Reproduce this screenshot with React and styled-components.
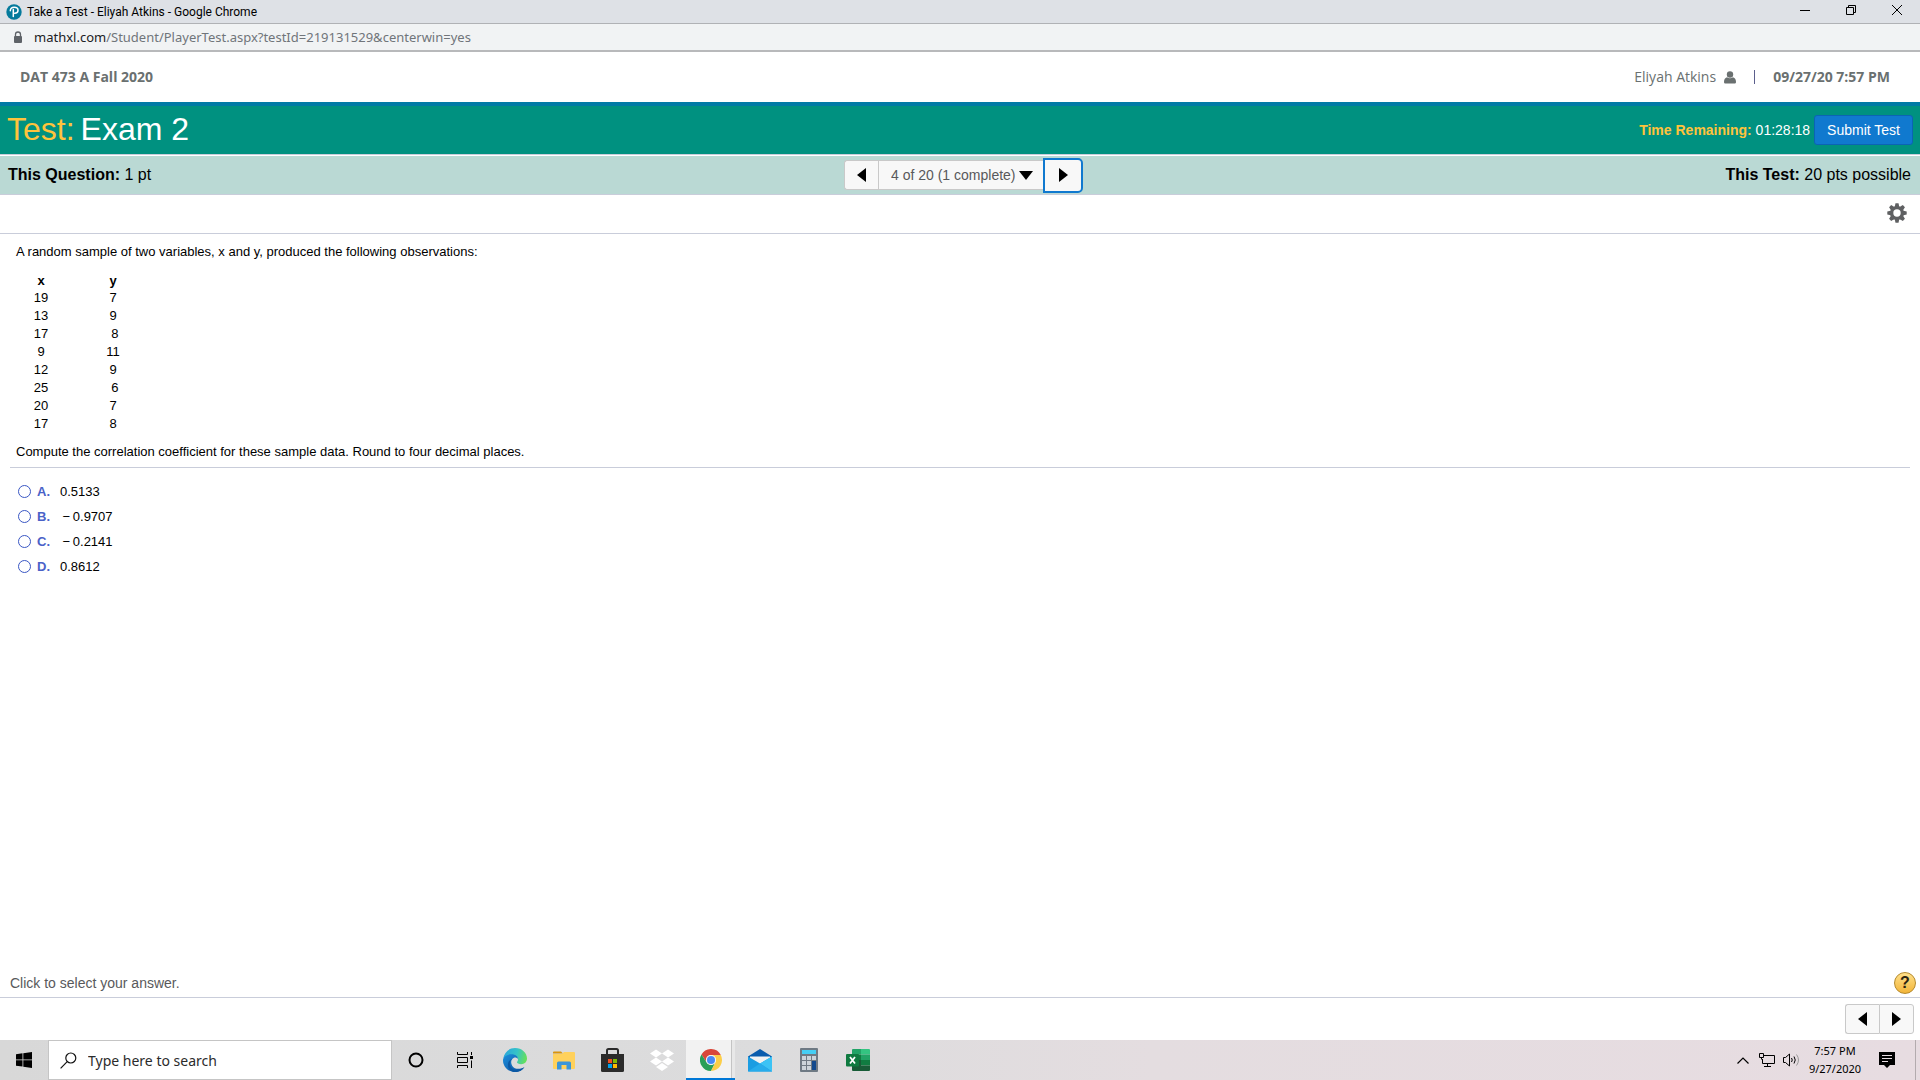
import React, { useState } from "react";
import styled, { createGlobalStyle } from "styled-components";

const GlobalStyle = createGlobalStyle`
  *, *::before, *::after { box-sizing: border-box; }
  html, body { margin: 0; padding: 0; }
  body { background: #fff; color: #000; font-family: "Liberation Sans", Arial, sans-serif; }
  button, input, select { font: inherit; color: inherit; margin: 0; }
  svg { display: block; flex: none; }
`;

const uiFont = `"Open Sans", "Segoe UI", sans-serif`;

const Screen = styled.div`
  min-height: 100vh;
  display: flex;
  flex-direction: column;
`;

const TitleBar = styled.div`
  display: flex;
  align-items: center;
  height: 24px;
  padding-left: 6px;
  background: #dee1e6;
  border-bottom: 1px solid #b0b2b5;
  font: 12px/22px Roboto, "Segoe UI", sans-serif;
`;

const WindowTitle = styled.span`
  flex: 1;
  padding-left: 5px;
`;

const WindowButton = styled.button`
  display: grid;
  place-items: center;
  align-self: flex-start;
  width: 46px;
  height: 20px;
  padding: 0;
  border: 0;
  background: none;
`;

const AddressBar = styled.div`
  display: flex;
  align-items: center;
  gap: 11px;
  height: 28px;
  padding-left: 13px;
  background: #f1f3f4;
  border-bottom: 2px solid #b8b9bb;
  font: 13px/26px "Noto Sans", sans-serif;
  color: #70757a;
`;

const Host = styled.span`
  color: #202124;
`;

const CourseBar = styled.header`
  display: flex;
  align-items: center;
  justify-content: space-between;
  height: 54px;
  padding: 0 30px 0 20px;
  border-bottom: 4px solid #007aa5;
  font: 14px/20px ${uiFont};
  color: #6a7070;
`;

const UserInfo = styled.div`
  display: flex;
  align-items: center;
`;

const UserLink = styled.a`
  display: flex;
  align-items: center;
  gap: 8px;
  color: inherit;
  text-decoration: none;
`;

const Divider = styled.span`
  width: 1px;
  height: 14px;
  margin: 0 18px;
  background: #5b5f8c;
`;

const TestBar = styled.div`
  display: flex;
  align-items: center;
  justify-content: space-between;
  height: 49px;
  padding: 0 7px;
  background: #009180;
  border-bottom: 1px solid #c9cdda;
  color: #fff;
`;

const TestTitle = styled.h1`
  display: flex;
  gap: 6px;
  margin: 0;
  padding-bottom: 2px;
  font-size: 32px;
  line-height: 40px;
  font-weight: 400;
`;

const Gold = styled.span`
  color: #ffc33c;
`;

const TimeBox = styled.div`
  display: flex;
  align-items: center;
  gap: 4px;
  font-size: 14px;
`;

const SubmitButton = styled.button`
  height: 30px;
  padding: 0 12px;
  border: 1px solid #0b64b4;
  border-radius: 3px;
  background: #1079cf;
  color: #fff;
`;

const QuestionBar = styled.div`
  display: grid;
  grid-template-columns: 1fr auto 1fr;
  align-items: center;
  height: 40px;
  padding: 0 9px 0 8px;
  background: #bad9d4;
  border-top: 1px solid #fff;
  border-bottom: 1px solid #c9cdda;
  font-size: 16px;
`;

const Points = styled.div`
  text-align: ${(p) => p.$align || "left"};
`;

const Pager = styled.nav`
  display: flex;
  align-items: center;
  margin-left: 8px;
`;

const PagerButton = styled.button`
  display: grid;
  place-items: center;
  width: ${(p) => (p.$side === "left" ? "34px" : "35px")};
  height: 30px;
  padding: 0;
  border: 1px solid #c9c9c9;
  border-radius: ${(p) => (p.$side === "left" ? "3px 0 0 3px" : "0 3px 3px 0")};
  border-right-width: ${(p) => (p.$side === "left" ? "0" : "1px")};
  background: #f8f8f8;
`;

const FocusedPagerButton = styled(PagerButton)`
  width: 40px;
  height: 35px;
  border: 2px solid #1079cf;
  border-radius: 0 5px 5px 0;
`;

const QuestionPicker = styled.label`
  display: flex;
  align-items: center;
  gap: 3px;
  height: 30px;
  padding: 0 10px 0 12px;
  border: 1px solid #c9c9c9;
  border-right: 0;
  background: #f8f8f8;
  font-size: 14px;
  color: #58595b;
`;

const PickerSelect = styled.select`
  appearance: none;
  padding: 0;
  border: 0;
  background: none;
  outline: 0;
`;

const Toolbar = styled.div`
  display: flex;
  align-items: center;
  justify-content: flex-end;
  height: 39px;
  padding: 0 13px 2px 0;
  border-bottom: 1px solid #c9cdda;
`;

const IconButton = styled.button`
  display: grid;
  place-items: center;
  padding: 0;
  border: 0;
  background: none;
`;

const Question = styled.main`
  flex: 1;
  padding: 8px 10px 0;
  font-size: 13px;
  line-height: 20px;
`;

const Prompt = styled.p`
  margin: 0;
  padding-left: 6px;
`;

const DataTable = styled.table`
  margin: 10px 0 9px;
  border-collapse: collapse;
  line-height: 18px;
  text-align: center;

  th, td { padding: 0; }
  th { line-height: 17px; }
  th:first-child { width: 62px; }
  th:last-child { width: 82px; }
`;

const Rule = styled.hr`
  height: 1px;
  margin: 5px 0 11px;
  border: 0;
  background: #c9cdda;
`;

const Choices = styled.fieldset`
  min-width: 0;
  margin: 0;
  padding: 0 0 0 8px;
  border: 0;
`;

const Choice = styled.label`
  display: flex;
  align-items: center;
  height: 25px;
`;

const Radio = styled.input`
  appearance: none;
  width: 13px;
  height: 13px;
  border: 1px solid #3a57c4;
  border-radius: 50%;
  background: #fff;

  &:checked { background: radial-gradient(#3a57c4 45%, #fff 50%); }
`;

const Letter = styled.b`
  width: 23px;
  margin-left: 6px;
  color: #4a62c8;
`;

const HintBar = styled.div`
  display: flex;
  align-items: center;
  justify-content: space-between;
  height: 30px;
  padding: 0 4px 0 10px;
  border-bottom: 1px solid #c9cdda;
  font-size: 14px;
  color: #58595b;
`;

const HelpButton = styled.button`
  width: 22px;
  height: 22px;
  padding: 0;
  border: 1px solid #b5892c;
  border-radius: 50%;
  background: linear-gradient(#ffe08a, #f2b53a);
  font: bold 16px/20px "Liberation Sans", Arial, sans-serif;
  color: #2c2410;
`;

const FooterNav = styled.nav`
  display: flex;
  align-items: center;
  justify-content: flex-end;
  height: 42px;
  padding-right: 6px;
`;

const TaskBar = styled.footer`
  display: flex;
  align-items: stretch;
  height: 40px;
  background: linear-gradient(90deg, #d8d8d8, #dcdcdd 40%, #e4dde0 60%, #e7dce1);
  font-family: ${uiFont};
`;

const StartButton = styled(IconButton)`
  width: 48px;
`;

const SearchBox = styled.label`
  display: flex;
  align-items: center;
  gap: 11px;
  width: 344px;
  padding-left: 11px;
  border: 1px solid #c5c5c5;
  background: #fff;
`;

const SearchInput = styled.input`
  flex: 1;
  min-width: 0;
  padding: 1px 0 0;
  border: 0;
  outline: 0;
  background: none;
  font: 14px/20px "Noto Sans", sans-serif;

  &::placeholder { color: #2b2b2b; opacity: 1; }
`;

const AppButton = styled(IconButton)`
  width: 49px;
  border-bottom: 2px solid ${(p) => (p.$active ? "#0078d7" : "transparent")};
  border-top: 2px solid transparent;
  background: ${(p) => (p.$active ? "linear-gradient(90deg, #f2f2f2 45px, #c4c4c4 45px 46px, #e8e8e8 46px) border-box" : "none")};
`;

const Tray = styled.div`
  display: flex;
  align-items: center;
  gap: 8px;
  margin-left: auto;
`;

const Clock = styled.time`
  width: 54px;
  font: 11px/18px "Noto Sans", sans-serif;
  text-align: center;
`;

const Notifications = styled(IconButton)`
  margin: 0 12px 0 9px;
`;

const ShowDesktop = styled(IconButton)`
  width: 5px;
  height: 40px;
  border-left: 1px solid #b3abae;
`;

const Triangle = ({ dir }) => (
  <svg width={dir === "down" ? 14 : 9} height={dir === "down" ? 9 : 14} aria-hidden="true">
    <path d={{ left: "M9 0V14L0 7Z", right: "M0 0V14L9 7Z", down: "M0 0H14L7 9Z" }[dir]} fill="#000" />
  </svg>
);

const PearsonIcon = () => (
  <svg width="16" height="16" viewBox="0 0 16 16">
    <circle cx="8" cy="8" r="7.7" fill="#047a9c" />
    <path d="M7.300 12.500V5.500M4.300 6.800C4.300 4.400 6 3.300 8.200 3.300c2.400 0 3.800 1.200 3.800 3 0 1.900-1.500 3-3.300 3" fill="none" stroke="#fff" strokeWidth="1.500" strokeLinecap="round" />
  </svg>
);

const LockIcon = () => (
  <svg width="10" height="13" viewBox="0 0 10 13">
    <path d="M2.500 6V3.500a2.500 2.500 0 0 1 5 0V6" fill="none" stroke="#5f6368" strokeWidth="1.300" />
    <rect x="1" y="5" width="8" height="7" rx="1" fill="#5f6368" />
  </svg>
);

const UserIcon = () => (
  <svg width="12" height="13" viewBox="0 0 12 13">
    <circle cx="6" cy="3.500" r="3.200" fill="#6a7070" />
    <path d="M3 6.200c1.800 1.500 4.200 1.500 6 0 2.200.500 3 2.500 3 4.800 0 1-.7 1.600-1.600 1.600H1.600C.7 12.600 0 12 0 11c0-2.300.8-4.300 3-4.800z" fill="#6a7070" />
  </svg>
);

const GearIcon = () => (
  <svg width="20" height="20" viewBox="-10 -10 20 20">
    <g fill="#5f6062">
      {[0, 45, 90, 135].map((a) => (
        <path key={a} transform={`rotate(${a})`} d="M-2.200-6.500-1.500-9.700h3l.7 3.200v13l-.7 3.200h-3l-.7-3.200z" />
      ))}
      <circle r="7" />
    </g>
    <circle r="3.700" fill="#fff" />
  </svg>
);

const WindowsIcon = () => (
  <svg width="16" height="16" viewBox="0 0 16 16">
    <path d="M0 2.200 6.500 1.300V7.500H0zM7.300 1.200 16 0V7.500H7.300zM0 8.300H6.500V14.600L0 13.700zM7.300 8.300H16V16L7.300 14.800z" />
  </svg>
);

const SearchIcon = () => (
  <svg width="17" height="17" viewBox="0 0 17 17" fill="none" stroke="#111" strokeWidth="1.200">
    <circle cx="10.800" cy="6" r="5" />
    <path d="M7.200 9.700.600 16.300" />
  </svg>
);

const CortanaIcon = () => (
  <svg width="18" height="16">
    <circle cx="8" cy="8" r="6.500" fill="none" stroke="#000" strokeWidth="2" />
  </svg>
);

const TaskViewIcon = () => (
  <svg width="18" height="16" viewBox="0 0 18 16" fill="none" stroke="#000">
    <path d="M.5 0V2.500H10.500V0M.5 16V13.500H10.500V16M.5 5.500H10.500V10.500H.5zM14.500 0V3M14.500 8.500V16" />
    <path d="M13 4h3v3h-3z" fill="#000" stroke="none" />
  </svg>
);

const EdgeIcon = () => (
  <svg width="24" height="24" viewBox="0 0 24 24">
    <defs>
      <linearGradient id="edgeTop" x1="0" x2="1" y1=".3" y2=".5">
        <stop offset="0" stopColor="#2aa5dc" />
        <stop offset=".55" stopColor="#35c3c8" />
        <stop offset="1" stopColor="#66e05a" />
      </linearGradient>
      <linearGradient id="edgeLow" x1="0" x2="1" y1="0" y2="1">
        <stop offset="0" stopColor="#1b8fdc" />
        <stop offset="1" stopColor="#0f4f9e" />
      </linearGradient>
    </defs>
    <path d="M.3 10.500C1.200 4.500 6 0 12 0c7 0 12 5 12 10.500 0 3.500-2.600 5.700-5.800 5.700-2.600 0-4.200-.900-4.200-1.900 0-.8 1-1.200 1-2.900C15 9 12.500 7.300 9 7.300 4.500 7.300 1.500 9.500.3 10.500z" fill="url(#edgeTop)" />
    <path d="M0 12.500C0 8.500 4 6.300 8.500 6.300c4 0 6.500 2.200 6.500 4.700-1-1.300-2.600-1.800-4-1.300-3 1.200-3.700 5-1.700 8.200 2 3 6.500 4 11.700 1.600C19 22.500 16 24 12.300 24 5.500 24 0 19 0 12.500z" fill="url(#edgeLow)" />
    <path d="M9.500 10.700c-3 2-3.500 5.800-1 9 2.500 3 8.500 3.200 13-.7-1.500 2.500-5 5-9.500 5-5 0-7.500-4-7-8 .3-2.600 2-4.500 4.500-5.300z" fill="#0c59a4" />
  </svg>
);

const FolderIcon = () => (
  <svg width="22" height="19" viewBox="0 0 22 19">
    <path d="M0 1.500Q0 .5 1 .5H8L10 2.500H0z" fill="#d9940c" />
    <path d="M0 3H9L11 1H21Q22 1 22 2V17Q22 18 21 18H1Q0 18 0 17z" fill="#ffd15c" />
    <path d="M4 18.500V12Q4 10.500 5.500 10.500h11Q18 10.500 18 12v6.500h-4.500V14h-5v4.500z" fill="#3b96d9" />
  </svg>
);

const StoreIcon = () => (
  <svg width="24" height="24" viewBox="0 0 24 24">
    <path d="M6 7V2.500Q6 1 7.500 1h8Q17 1 17 2.500V7" fill="none" stroke="#2b2b2b" strokeWidth="2" />
    <path d="M0 6H23V22.500Q23 24 21.500 24h-20Q0 24 0 22.500z" fill="#2b2b2b" />
    <path d="M7 11h4v4H7z" fill="#f25022" />
    <path d="M12 11h4v4h-4z" fill="#7fba00" />
    <path d="M7 16h4v4H7z" fill="#00a4ef" />
    <path d="M12 16h4v4h-4z" fill="#ffb900" />
  </svg>
);

const DropboxIcon = () => (
  <svg width="24" height="23" viewBox="0 0 24 23" fill="#fff">
    <path d="M6 .5 12 4.500 6 8.500 0 4.500zM18 .5 24 4.500 18 8.500 12 4.500zM6 8.500 12 12.500 6 16.500 0 12.500zM18 8.500 24 12.500 18 16.500 12 12.500zM12 14 18 18 12 22 6 18z" />
  </svg>
);

const ChromeIcon = () => (
  <svg width="22" height="22" viewBox="-11 -11 22 22">
    <path d="M0-5H9.800A11 11 0 0 0-9.530-5.500L-4.330 2.500A5 5 0 0 1 0-5z" fill="#d9473a" />
    <path d="M-9.530-5.500A11 11 0 0 0 0 11L4.330 2.500A5 5 0 0 1-4.330 2.500z" fill="#2a9f58" />
    <path d="M0 11A11 11 0 0 0 9.800-5H0A5 5 0 0 1 4.330 2.500z" fill="#fcce48" />
    <circle r="5" fill="#f4f4f4" />
    <circle r="4" fill="#4a8af4" />
  </svg>
);

const MailIcon = () => (
  <svg width="24" height="23" viewBox="0 0 24 23">
    <path d="M0 7.500 12 0 24 7.500V9H0z" fill="#0a5cad" />
    <path d="M2 7.500H22V14L12 18 2 14z" fill="#f2f2f2" />
    <path d="M0 7.500 12 14.500 24 7.500V22.500H0z" fill="#1b9de2" />
    <path d="M24 7.500V22.500L12 14.500z" fill="#3cc3f5" />
    <path d="M0 22.500 12 14.500 24 22.500z" fill="#27aceb" />
  </svg>
);

const CalculatorIcon = () => (
  <svg width="18" height="24" viewBox="0 0 18 24">
    <rect width="18" height="24" rx="1" fill="#6f7a84" />
    <path d="M2 2h14v4H2z" fill="#45cff5" />
    <path d="M2 8h4v4H2zM7 8h4v4H7zM12 8h4v4h-4zM2 13h4v4H2zM7 13h4v4H7zM2 18h4v4H2zM7 18h4v4H7z" fill="#ccd4da" />
    <path d="M12 13h4v9h-4z" fill="#134a8e" />
  </svg>
);

const ExcelIcon = () => (
  <svg width="24" height="22" viewBox="0 0 24 22">
    <path d="M6 1Q6 0 7 0h8v5.500H6z" fill="#21a366" />
    <path d="M15 0h8q1 0 1 1v4.500h-9z" fill="#33c481" />
    <path d="M6 5.500h9V11H6zM15 11h9v5.500h-9z" fill="#107c41" />
    <path d="M15 5.500h9V11h-9z" fill="#21a366" />
    <path d="M6 11h9v5.500h9V21q0 1-1 1H7q-1 0-1-1z" fill="#185c37" />
    <rect y="5" width="13" height="12.500" rx="1" fill="#0f7a40" />
    <path d="M4 8 9 14.500M9 8 4 14.500" stroke="#fff" strokeWidth="1.800" />
  </svg>
);

const apps = [
  ["Cortana", CortanaIcon],
  ["Task View", TaskViewIcon],
  ["Microsoft Edge", EdgeIcon],
  ["File Explorer", FolderIcon],
  ["Microsoft Store", StoreIcon],
  ["Dropbox", DropboxIcon],
  ["Google Chrome", ChromeIcon],
  ["Mail", MailIcon],
  ["Calculator", CalculatorIcon],
  ["Excel", ExcelIcon],
];

const rows = [
  ["19", "7"],
  ["13", "9"],
  ["17", "\u00a08"],
  ["9", "11"],
  ["12", "9"],
  ["25", "\u00a06"],
  ["20", "7"],
  ["17", "8"],
];

const choices = [
  ["A", "0.5133"],
  ["B", "\u2009\u2212\u20090.9707"],
  ["C", "\u2009\u2212\u20090.2141"],
  ["D", "0.8612"],
];

export default function App() {
  const [answer, setAnswer] = useState(null);
  return (
    <Screen>
      <GlobalStyle />
      <TitleBar>
        <PearsonIcon />
        <WindowTitle>Take a Test - Eliyah Atkins - Google Chrome</WindowTitle>
        <WindowButton aria-label="Minimize">
          <svg width="10" height="10"><path d="M0 5.500H10" stroke="#000" /></svg>
        </WindowButton>
        <WindowButton aria-label="Restore">
          <svg width="10" height="10" fill="none" stroke="#000"><path d="M.5 2.500H7.500V9.500H.5zM2.500 2.500V.5H9.500V7.500H7.500" /></svg>
        </WindowButton>
        <WindowButton aria-label="Close">
          <svg width="10" height="10" stroke="#000"><path d="M0 0 10 10M10 0 0 10" /></svg>
        </WindowButton>
      </TitleBar>
      <AddressBar>
        <LockIcon />
        <span><Host>mathxl.com</Host>/Student/PlayerTest.aspx?testId=219131529&amp;centerwin=yes</span>
      </AddressBar>
      <CourseBar>
        <b>DAT 473 A Fall 2020</b>
        <UserInfo>
          <UserLink href="#">Eliyah Atkins<UserIcon /></UserLink>
          <Divider />
          <b>09/27/20 7:57 PM</b>
        </UserInfo>
      </CourseBar>
      <TestBar>
        <TestTitle><Gold>Test:</Gold> <span>Exam 2</span></TestTitle>
        <TimeBox>
          <span><Gold as="b">Time Remaining:</Gold> 01:28:18</span>
          <SubmitButton>Submit Test</SubmitButton>
        </TimeBox>
      </TestBar>
      <QuestionBar>
        <Points><b>This Question:</b> 1 pt</Points>
        <Pager>
          <PagerButton $side="left" aria-label="Previous question"><Triangle dir="left" /></PagerButton>
          <QuestionPicker>
            <PickerSelect aria-label="Question"><option>4 of 20 (1 complete)</option></PickerSelect>
            <Triangle dir="down" />
          </QuestionPicker>
          <FocusedPagerButton aria-label="Next question"><Triangle dir="right" /></FocusedPagerButton>
        </Pager>
        <Points $align="right"><b>This Test:</b> 20 pts possible</Points>
      </QuestionBar>
      <Toolbar>
        <IconButton aria-label="Settings"><GearIcon /></IconButton>
      </Toolbar>
      <Question>
        <Prompt>A random sample of two variables, x and y, produced the following observations:</Prompt>
        <DataTable>
          <thead><tr><th>x</th><th>y</th></tr></thead>
          <tbody>
            {rows.map(([x, y], i) => <tr key={i}><td>{x}</td><td>{y}</td></tr>)}
          </tbody>
        </DataTable>
        <Prompt>Compute the correlation coefficient for these sample data. Round to four decimal places.</Prompt>
        <Rule />
        <Choices aria-label="Answer choices">
          {choices.map(([letter, value]) => (
            <Choice key={letter}>
              <Radio type="radio" name="answer" checked={answer === letter} onChange={() => setAnswer(letter)} />
              <Letter>{letter}.</Letter>
              <span>{value}</span>
            </Choice>
          ))}
        </Choices>
      </Question>
      <HintBar>
        <span>Click to select your answer.</span>
        <HelpButton aria-label="Help">?</HelpButton>
      </HintBar>
      <FooterNav>
        <PagerButton $side="left" aria-label="Previous"><Triangle dir="left" /></PagerButton>
        <PagerButton $side="right" aria-label="Next"><Triangle dir="right" /></PagerButton>
      </FooterNav>
      <TaskBar>
        <StartButton aria-label="Start"><WindowsIcon /></StartButton>
        <SearchBox>
          <SearchIcon />
          <SearchInput type="text" placeholder="Type here to search" aria-label="Type here to search" />
        </SearchBox>
        {apps.map(([name, Icon]) => (
          <AppButton key={name} aria-label={name} $active={name === "Google Chrome"}><Icon /></AppButton>
        ))}
        <Tray>
          <svg width="14" height="7" fill="none" stroke="#000" strokeWidth="1.200"><path d="M.5 6.500 6 1 11.500 6.500" /></svg>
          <svg width="16" height="14" fill="none" stroke="#000"><path d="M5 2.500H15.500V10.500H3.500V6M.5.5H4.500V4.500H.5zM2.500 4.500V6.500M8.500 10.500V13M5 13.500H12" /></svg>
          <svg width="17" height="14" fill="none" stroke="#000"><path d="M.5 4.500H2.500L6.500 1V13L2.500 9.500H.5zM8.500 5Q10 7 8.500 9M11 3.500Q13.500 7 11 10.500" /><path d="M13.500 1.500Q17.500 7 13.500 12.500" stroke="#999" /></svg>
          <Clock>7:57 PM<br />9/27/2020</Clock>
          <Notifications aria-label="Notifications">
            <svg width="16" height="16"><path d="M0 0H16V13H11L8 16 5 13H0z" /><path d="M3 3.500H13M3 6.500H13M3 9.500H9" stroke="#e7dce1" /></svg>
          </Notifications>
          <ShowDesktop aria-label="Show desktop" />
        </Tray>
      </TaskBar>
    </Screen>
  );
}
